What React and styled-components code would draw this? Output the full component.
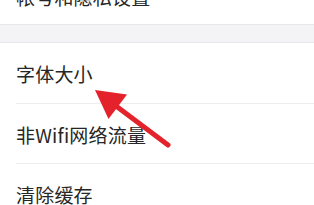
import React from 'react';
import styled, { createGlobalStyle } from 'styled-components';

const GlobalStyle = createGlobalStyle`
  html, body {
    margin: 0;
    padding: 0;
    background: #fff;
    overflow: hidden;
  }
  body {
    font-family: "Noto Sans CJK SC", "Noto Sans", sans-serif;
  }
`

const groups = [
  [{ label: '帐号和隐私设置', h: 57 }],
  [
    { label: '字体大小', h: 61 },
    { label: '非Wifi网络流量', h: 60 },
    { label: '清除缓存', h: 60 },
  ],
];

export default function App() {
  return (
    <>
      <GlobalStyle />
      <Page>
        {groups.map((group, gi) => (
          <React.Fragment key={gi}>
            {gi > 0 && <Gap />}
            <Group>
              {group.map((item) => (
                <Row key={item.label} $h={item.h}>
                  <Label>{item.label}</Label>
                </Row>
              ))}
            </Group>
          </React.Fragment>
        ))}
        <Arrow viewBox="0 0 314 205">
          <line x1="168" y1="145" x2="114" y2="104.5" stroke="#e3222b" strokeWidth="5" strokeLinecap="round" />
          <polygon points="95,90 127,94.5 108.5,119" fill="#e3222b" />
        </Arrow>
      </Page>
    </>
  )
}

const Page = styled.div`
  position: relative;
  width: 314px;
  height: 205px;
  overflow: hidden;
  display: flex;
  flex-direction: column;
`
const Group = styled.ul`
  list-style: none;
  margin: 0;
  padding: 0;
  background: #fff;

  &:first-child {
    margin-top: -33px;
  }
`
const Gap = styled.div`
  flex: none;
  height: 17px;
  background: #f4f4f6;
  border-top: 1px solid #e8e8ea;
  border-bottom: 1px solid #e8e8ea;
`
const Row = styled.li`
  display: flex;
  align-items: center;
  height: ${(p) => p.$h}px;
  padding-top: 1px;
  margin-left: 16px;
  box-sizing: border-box;
  border-bottom: 1px solid #ededed;

  &:last-child {
    border-bottom: none;
  }
`
const Label = styled.span`
  font-size: 19px;
  color: #262626;
  letter-spacing: 0.2px;
`
const Arrow = styled.svg`
  position: absolute;
  left: 0;
  top: 0;
  width: 314px;
  height: 205px;
  pointer-events: none;
`
